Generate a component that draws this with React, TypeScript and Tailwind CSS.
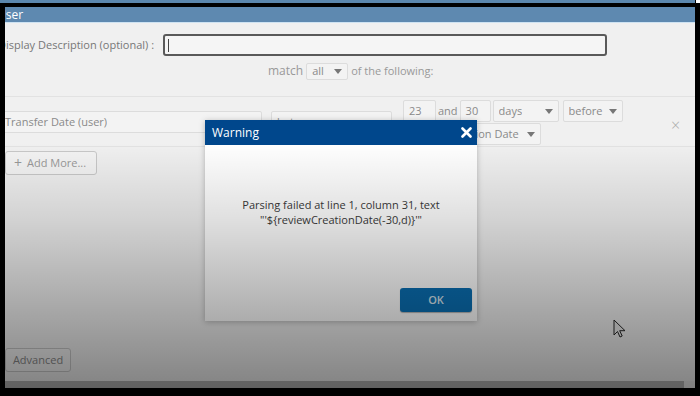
import React from 'react';

const font = { fontFamily: '"Open Sans", "Noto Sans", sans-serif' };

const Caret = () => (
  <svg width="8" height="5" viewBox="0 0 8 5" className="shrink-0">
    <path d="M0 0h8L4 5z" fill="#777" />
  </svg>
);

const Select: React.FC<{ text: string; className: string }> = ({ text, className }) => (
  <div
    className={`flex items-center justify-between rounded-[2px] border border-[#dcdcdc] bg-[#f3f3f3] px-[5px] text-[11px] text-[#8a8a8a] ${className}`}
  >
    <span className="truncate">{text}</span>
    <Caret />
  </div>
);

const App: React.FC = () => {
  return (
    <div className="relative h-[396px] w-[700px] overflow-hidden bg-black" style={font}>
      <div className="absolute left-0 top-0 h-[3px] w-[695px] bg-[#5b87ad]" />
      <div className="absolute right-0 top-0 h-[3px] w-[4px] bg-white" />

      <div className="absolute left-[5px] top-[7px] flex h-[381px] w-[690px] flex-col overflow-hidden bg-[#f0f0f0]">
        {/* title bar */}
        <div className="h-[16px] shrink-0 border-b border-[#cfe3f2] bg-[#5e89b0] text-[12px] leading-[16px] text-white">
          <span className="ml-[-8px]">User</span>
        </div>

        <div className="relative flex-1 text-[11px] text-[#777]">
          {/* description row */}
          <div className="ml-[-7px] mt-[11px] flex items-center">
            <span className="w-[165px] shrink-0">Display Description (optional) :</span>
            <div className="flex h-[22px] w-[444px] items-center rounded-[3px] border-2 border-[#5a5a5a] bg-[#f5f5f5] pl-[3px]">
              <div className="h-[13px] w-px bg-[#444]" />
            </div>
          </div>

          {/* match row */}
          <div className="ml-[263px] mt-[6px] flex items-center gap-[3px]">
            <span className="text-[12px] text-[#999]">match</span>
            <Select text="all" className="h-[17px] w-[42px] text-[10px]" />
            <span className="text-[#999]">of the following:</span>
          </div>

          <div className="mt-[16px] h-px bg-[#e2e2e2]" />

          {/* condition row */}
          <div className="relative flex h-[49px] items-start">
            <Select text="Transfer Date (user)" className="ml-[-10px] mt-[14px] h-[22px] w-[267px] pl-[9px]" />
            <Select text="between" className="ml-[9px] mt-[14px] h-[22px] w-[121px]" />
            <div className="ml-[11px] mt-[3px] flex flex-col gap-[1px]">
              <div className="flex items-center">
                <div className="flex h-[22px] w-[33px] items-center rounded-[2px] border border-[#dcdcdc] bg-[#f3f3f3] px-[5px] text-[#8a8a8a]">
                  23
                </div>
                <span className="mx-[2px] text-[#8a8a8a]">and</span>
                <div className="flex h-[22px] w-[31px] items-center rounded-[2px] border border-[#dcdcdc] bg-[#f3f3f3] px-[5px] text-[#8a8a8a]">
                  30
                </div>
                <Select text="days" className="ml-[2px] h-[22px] w-[66px]" />
                <Select text="before" className="ml-[4px] h-[22px] w-[60px]" />
              </div>
              <Select text="Review Creation Date" className="h-[22px] w-[138px]" />
            </div>
            <span className="absolute left-[666px] top-[16px] text-[16px] font-light text-[#aaa]">×</span>
          </div>

          <div className="h-px bg-[#e2e2e2]" />

          <button className="mt-[4px] flex h-[24px] w-[92px] items-center gap-[5px] rounded-[3px] border border-[#c8c8c8] bg-[#f3f3f3] pl-[8px] text-[11px] text-[#999]">
            <span className="text-[14px] leading-none">+</span>
            <span>Add More...</span>
          </button>

          <button className="absolute left-0 top-[325px] h-[24px] w-[66px] rounded-[3px] border border-[#c8c8c8] bg-[#f3f3f3] text-[11px] text-[#888]">
            Advanced
          </button>
        </div>

        <div className="flex h-[7px] shrink-0">
          <div className="w-[679px] bg-[#b2b2b2]" />
          <div className="flex-1 bg-[#eaeaea]" />
        </div>
      </div>

      {/* warning dialog */}
      <div className="absolute left-[205px] top-[120px] flex h-[201px] w-[272px] flex-col bg-white shadow-[0_1px_6px_rgba(0,0,0,0.25)]">
        <div className="flex h-[25px] items-center justify-between bg-[#00478c] pl-[7px] pr-[5px] text-[12px] text-white">
          <span>Warning</span>
          <svg width="11" height="11" viewBox="0 0 11 11">
            <path d="M1.5 1.5l8 8M9.5 1.5l-8 8" stroke="white" strokeWidth="2.6" strokeLinecap="round" />
          </svg>
        </div>
        <div className="flex flex-1 flex-col">
          <div className="mt-[52px] text-center text-[11px] leading-[15px] text-[#3a3a3a]">
            <div>Parsing failed at line 1, column 31, text</div>
            <div>"'${'{'}reviewCreationDate(-30,d){'}'}'"</div>
          </div>
          <div className="mt-auto mb-[9px] mr-[5px] flex justify-end">
            <button className="h-[24px] w-[72px] rounded-[3px] bg-[#0a6fb3] text-[11px] font-semibold text-[#d8e6f0] shadow-[0_1px_1px_rgba(0,0,0,0.3)]">
              OK
            </button>
          </div>
        </div>
      </div>

      {/* video dimming */}
      <div className="pointer-events-none absolute inset-0 bg-[linear-gradient(to_bottom,rgba(0,0,0,0)_0%,rgba(0,0,0,0)_36%,rgba(0,0,0,0.12)_55%,rgba(0,0,0,0.3)_78%,rgba(0,0,0,0.47)_100%)]" />

      {/* mouse pointer */}
      <svg className="absolute left-[613px] top-[319px]" width="13" height="19" viewBox="0 0 13 19">
        <path d="M1 1v15l3.5-3.5 2.5 5.5 2.2-1-2.5-5.3H12z" fill="#9a9a9a" stroke="#1a1a1a" strokeWidth="1" strokeLinejoin="round" />
      </svg>

      {/* frame */}
      <div className="absolute bottom-0 left-0 h-[8px] w-full bg-black" />
    </div>
  );
};

export default App;
